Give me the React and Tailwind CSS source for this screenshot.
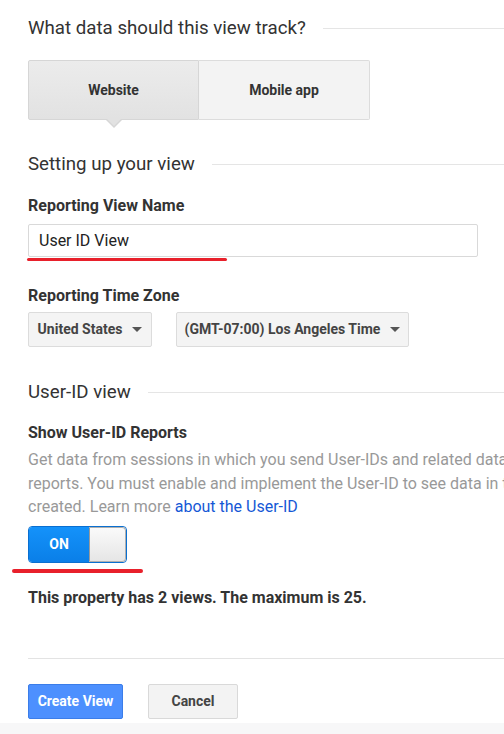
import React from "react"

function SectionTitle({ children, className = "" }) {
    return (
        <div className={"flex items-center h-6 " + className}>
            <h2 className="text-[18.7px] leading-6 text-[#333] whitespace-nowrap">{children}</h2>
            <div className="flex-1 ml-[17px] border-t border-[#e5e5e5]" />
        </div>
    )
}

function Caret() {
    return <span className="inline-block ml-[10px] w-0 h-0 border-l-[5px] border-r-[5px] border-t-[5px] border-l-transparent border-r-transparent border-t-[#555]" />
}

export default function App() {
    return (
        <div className="w-[504px] h-[734px] overflow-hidden bg-white flex flex-col font-['Roboto',sans-serif]">
            <div className="relative pl-[28px] pt-4 w-[504px]">
                <SectionTitle>What data should this view track?</SectionTitle>

                {/* view type selector */}
                <div className="mt-5 flex w-[342px] h-[60px] relative">
                    <button className="relative w-[171px] h-full border border-[#d6d6d6] rounded-l-[2px] bg-gradient-to-b from-[#ececec] to-[#e2e2e2] text-[14px] font-bold text-[#333]">
                        Website
                        <span className="absolute left-1/2 -translate-x-1/2 top-full w-0 h-0 border-l-[9px] border-r-[9px] border-t-[9px] border-l-transparent border-r-transparent border-t-[#d6d6d6]" />
                        <span className="absolute left-1/2 -translate-x-1/2 top-[calc(100%-1px)] w-0 h-0 border-l-[8px] border-r-[8px] border-t-[8px] border-l-transparent border-r-transparent border-t-[#e2e2e2]" />
                    </button>
                    <button className="w-[171px] h-full border border-l-0 border-[#dcdcdc] rounded-r-[2px] bg-[#f3f3f3] text-[14px] font-bold text-[#333]">
                        Mobile app
                    </button>
                </div>

                <SectionTitle className="mt-8">Setting up your view</SectionTitle>

                <div className="mt-5 text-[16px] leading-5 font-bold text-[#333]">Reporting View Name</div>
                <div className="mt-2 w-[450px] h-[33px] border border-[#d9d9d9] rounded-[2px] flex items-center px-[10px] text-[16px] text-[#222]">
                    User ID View
                </div>
                <div className="absolute left-[27px] top-[258px] w-[200px] h-[3px] rounded-full bg-[#e8202b]" />

                <div className="mt-[29px] text-[16px] leading-5 font-bold text-[#333]">Reporting Time Zone</div>
                <div className="mt-[6px] flex gap-[24px]">
                    <button className="h-[35px] w-[124px] border border-[#dcdcdc] rounded-[2px] bg-[#f4f4f4] flex items-center justify-center text-[14px] font-bold text-[#444]">
                        United States<Caret />
                    </button>
                    <button className="h-[35px] w-[233px] border border-[#dcdcdc] rounded-[2px] bg-[#f4f4f4] flex items-center justify-center text-[14px] font-bold text-[#444]">
                        (GMT-07:00) Los Angeles Time<Caret />
                    </button>
                </div>

                <SectionTitle className="mt-[33px]">User-ID view</SectionTitle>

                <div className="mt-[19px] text-[16px] leading-5 font-bold text-[#333]">Show User-ID Reports</div>
                <div className="mt-[5px] w-[476px] overflow-hidden text-[16px] leading-[23.5px] text-[#999] whitespace-nowrap">
                    <div>Get data from sessions in which you send User-IDs and related data to your</div>
                    <div>reports. You must enable and implement the User-ID to see data in this view</div>
                    <div>created. Learn more <a className="text-[#1558d6]">about the User-ID</a></div>
                </div>

                {/* toggle */}
                <div className="mt-[7px] flex w-[99px] h-[37px] rounded-[4px] overflow-hidden border border-[#0a6fd0]">
                    <div className="w-[60px] bg-gradient-to-b from-[#1492fa] to-[#0a7fe8] flex items-center justify-center text-white text-[14px] font-bold">ON</div>
                    <div className="flex-1 bg-gradient-to-b from-[#fafafa] to-[#e6e6e6] border-l border-[#9a9a9a] rounded-r-[4px] border-r border-y border-r-[#b0b0b0] border-y-[#b0b0b0]" />
                </div>
                <div className="absolute left-[12px] top-[569px] w-[131px] h-[4px] rounded-full bg-[#e8202b]" />

                <div className="mt-[25px] text-[16px] leading-5 font-bold text-[#333]">This property has 2 views. The maximum is 25.</div>

                <div className="mt-[50px] border-t border-[#e3e3e3]" />

                <div className="mt-[25px] flex gap-[25px] pb-1">
                    <button className="h-[35px] w-[95px] rounded-[2px] bg-[#4d90fe] border border-[#3b7de9] text-white text-[14px] font-bold">Create View</button>
                    <button className="h-[35px] w-[90px] rounded-[2px] bg-[#f3f3f3] border border-[#d9d9d9] text-[#444] text-[14px] font-bold">Cancel</button>
                </div>
            </div>
            <div className="flex-1 bg-[#f7f7f8]" />
        </div>
    )
}
